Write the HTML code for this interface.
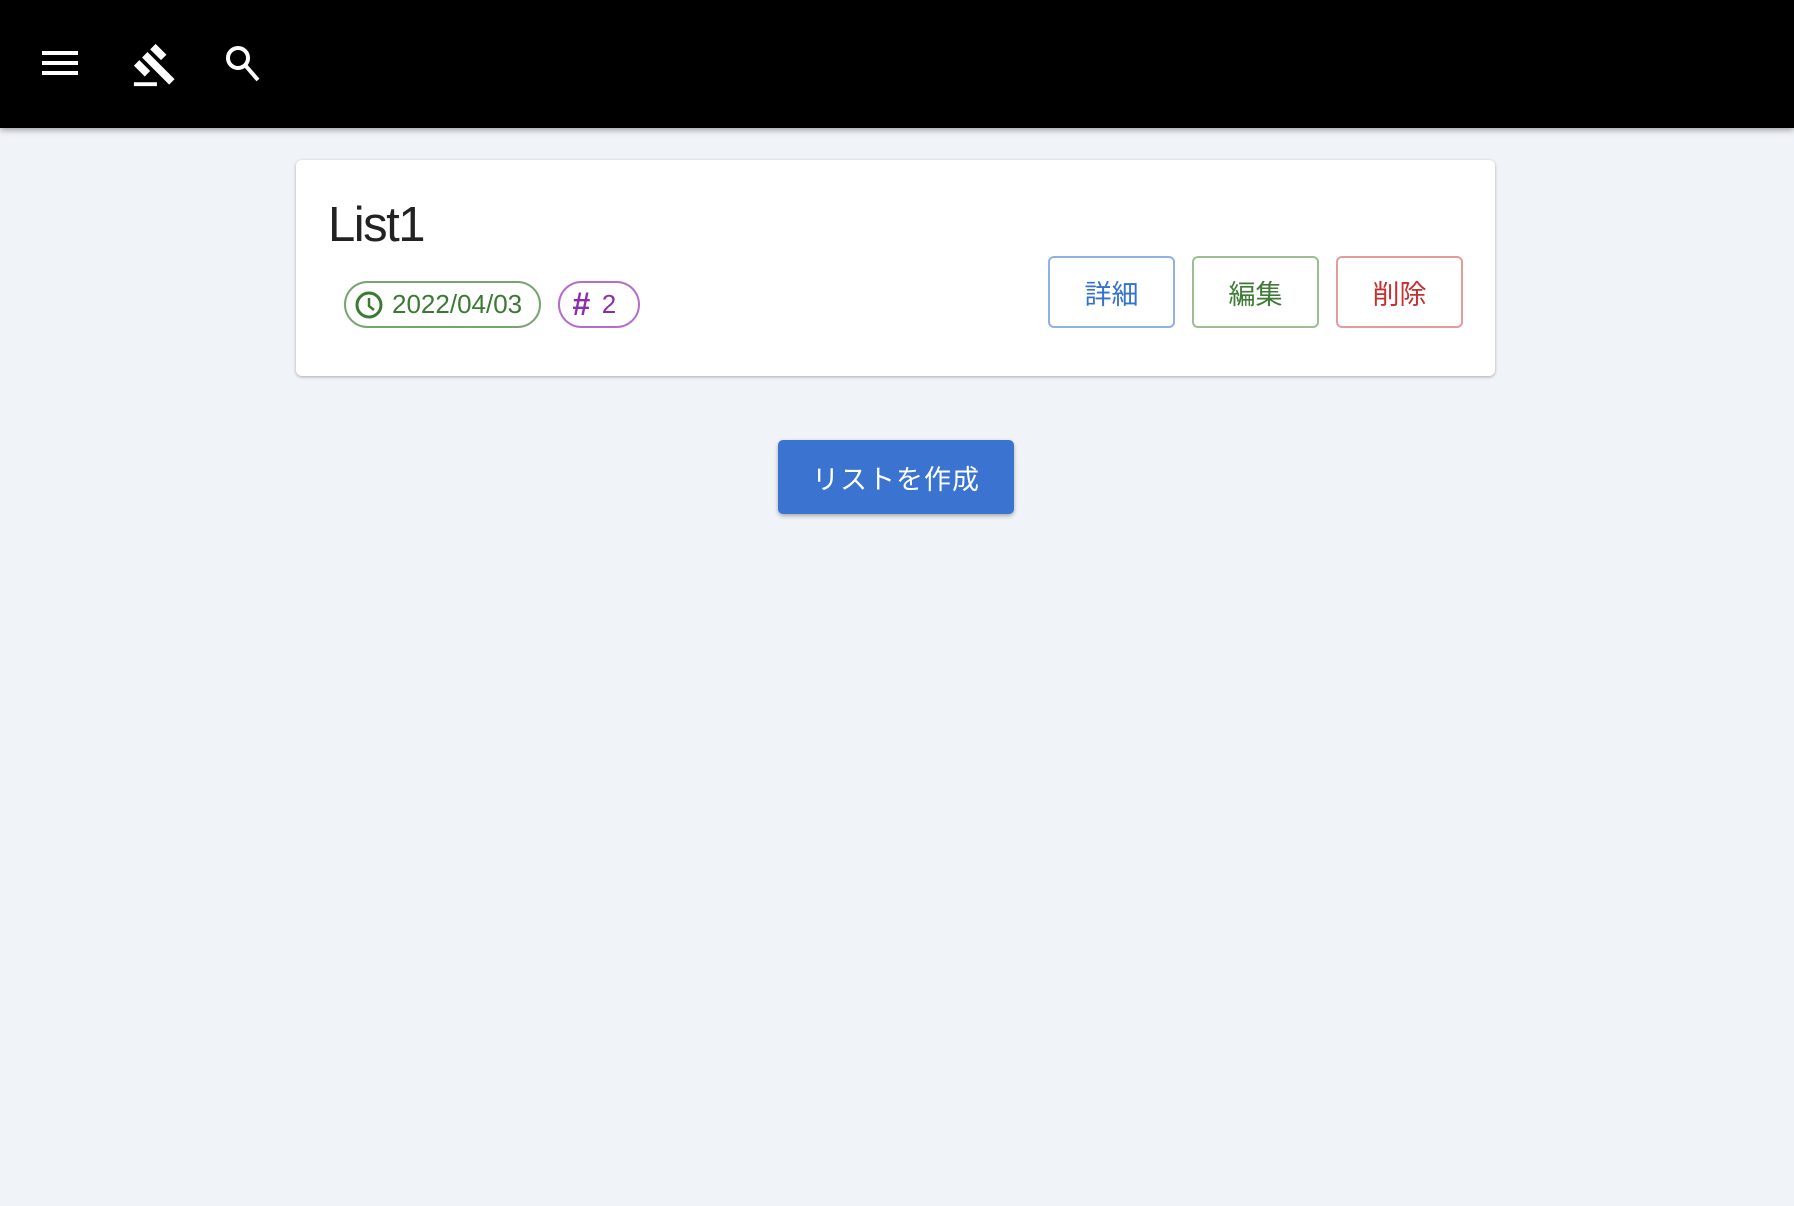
<!DOCTYPE html>
<html><head><meta charset="utf-8"><style>
body{margin:0;width:1794px;height:1206px;background:#f0f3f7;font-family:"Liberation Sans","Noto Sans CJK JP",sans-serif;position:relative;overflow:hidden}
.hdr{position:absolute;left:0;top:0;width:1794px;height:128px;background:#000;box-shadow:0 2px 6px rgba(0,0,0,.35)}
.card{position:absolute;left:296px;top:160px;width:1199px;height:216px;background:#fff;border-radius:6px;box-shadow:0 1px 3px rgba(0,0,0,.3)}
.title{position:absolute;left:32px;top:37px;font-size:49px;color:#222;letter-spacing:-1.5px}
.chip{position:absolute;top:121px;height:47px;border-radius:24px;font-size:26px;display:flex;align-items:center;box-sizing:border-box}
.btn{position:absolute;top:96px;width:127px;height:72px;box-sizing:border-box;border:2px solid;border-radius:6px;font-size:27px;display:flex;align-items:center;justify-content:center}
.create{position:absolute;left:778px;top:440px;width:236px;height:74px;background:#3a74d0;color:#fff;border-radius:5px;font-size:27px;display:flex;align-items:center;justify-content:center;box-shadow:0 2px 4px rgba(0,0,0,.3);letter-spacing:1px}
</style></head><body>
<div class="hdr">
<svg style="position:absolute;left:42px;top:51px" width="36" height="24"><rect x="0" y="0" width="36" height="4" fill="#fff"/><rect x="0" y="10" width="36" height="4" fill="#fff"/><rect x="0" y="20" width="36" height="4" fill="#fff"/></svg>
<svg style="position:absolute;left:132px;top:42px" width="46" height="46" viewBox="0 0 24 24"><path fill="#fff" d="M1 21h12v2H1zM5.245 8.07l2.83-2.827 14.14 14.142-2.828 2.828zM12.317 1l5.657 5.656-2.83 2.83-5.654-5.66zM3.825 9.485l5.657 5.657-2.828 2.828-5.657-5.657z"/></svg>
<svg style="position:absolute;left:224px;top:44px" width="40" height="40" viewBox="0 0 40 40"><circle cx="14" cy="14" r="10" fill="none" stroke="#fff" stroke-width="4"/><line x1="21" y1="21" x2="34" y2="36" stroke="#fff" stroke-width="4"/></svg>
</div>
<div class="card">
<div class="title">List1</div>
<div class="chip" style="left:48px;width:197px;border:2px solid #76a56f;color:#3a7a33;padding-left:8px">
<svg width="30" height="30" viewBox="0 0 30 30"><circle cx="15" cy="15" r="12" fill="none" stroke="#3a7a33" stroke-width="3"/><polyline points="15,8 15,16 20,20" fill="none" stroke="#3a7a33" stroke-width="2.5"/></svg>
<span style="margin-left:8px">2022/04/03</span></div>
<div class="chip" style="left:262px;width:82px;border:2px solid #b56ccb;color:#8a2fac;padding-left:12px"><span style="font-size:32px;font-style:italic;font-weight:bold">#</span><span style="margin-left:12px">2</span></div>
<div class="btn" style="left:752px;border-color:#8fb1e6;color:#3372cf">詳細</div>
<div class="btn" style="left:896px;border-color:#9bbf93;color:#3f7a37">編集</div>
<div class="btn" style="left:1040px;border-color:#e39b9b;color:#c53030">削除</div>
</div>
<div class="create">リストを作成</div>
</body></html>
